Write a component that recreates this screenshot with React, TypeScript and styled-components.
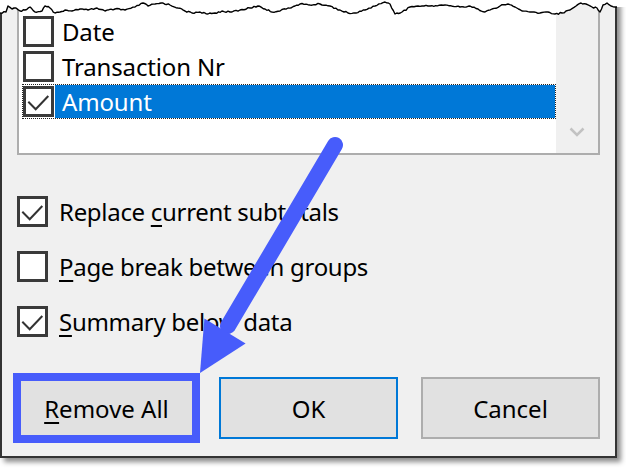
import React from "react";
import styled, { createGlobalStyle } from "styled-components";

const Global = createGlobalStyle`
  html, body { margin: 0; padding: 0; background: #ffffff; }
  body {
    width: 626px;
    height: 470px;
    overflow: hidden;
    font-family: "Noto Sans", "Segoe UI", "Liberation Sans", sans-serif;
  }
`;

const ACCENT = "#475cfb";

const Stage = styled.div`
  position: relative;
  width: 626px;
  height: 470px;
  background: #ffffff;
  overflow: hidden;
`;

const Dialog = styled.div`
  width: 617px;
  height: 458px;
  box-sizing: border-box;
  background: #f0f0f0;
  border: 2px solid #333333;
  border-top: none;
  box-shadow: 4px 4px 5px rgba(0, 0, 0, 0.45);
  padding: 0 15px 17px;
  display: flex;
  flex-direction: column;
`;

const ListBox = styled.div`
  height: 155px;
  box-sizing: border-box;
  border: 2px solid #adadad;
  background: #ffffff;
  display: flex;
`;

const List = styled.div`
  flex: 1;
  padding: 12px 0 0 3px;
  display: flex;
  flex-direction: column;
`;

const ScrollBar = styled.div`
  width: 42px;
  background: #f0f0f0;
  display: flex;
  flex-direction: column;
  justify-content: flex-end;
`;

const ScrollButton = styled.div`
  height: 42px;
  display: flex;
  align-items: center;
  justify-content: center;
`;

const Item = styled.div<{ $focused?: boolean }>`
  height: 35px;
  box-sizing: border-box;
  border: 1px dotted ${(p) => (p.$focused ? "#222" : "transparent")};
  display: flex;
  align-items: center;
`;

const ItemLabel = styled.div<{ $selected?: boolean }>`
  flex: 1;
  height: 100%;
  display: flex;
  align-items: center;
  padding-left: 7px;
  margin-left: 1px;
  font-size: 24px;
  letter-spacing: -0.15px;
  color: ${(p) => (p.$selected ? "#ffffff" : "#000000")};
  background: ${(p) => (p.$selected ? "#0078d7" : "transparent")};
`;

const Box = styled.div`
  width: 31px;
  height: 31px;
  flex: none;
  box-sizing: border-box;
  border: 3px solid #3a3a3a;
  background: #ffffff;
  display: flex;
`;

const Options = styled.div`
  margin-top: 29px;
  display: flex;
  flex-direction: column;
`;

const OptionRow = styled.label`
  height: 55px;
  display: flex;
  align-items: center;
  gap: 11px;
  font-size: 24px;
  letter-spacing: -0.3px;
  color: #000000;
`;

const Key = styled.span`
  text-decoration: underline;
  text-decoration-thickness: 2px;
  text-underline-offset: 4px;
`;

const Buttons = styled.div`
  margin-top: 28px;
  display: grid;
  grid-template-columns: repeat(3, 1fr);
  gap: 23px;
`;

const Button = styled.button<{ $default?: boolean }>`
  height: 62px;
  box-sizing: border-box;
  background: #e1e1e1;
  border: 2px solid ${(p) => (p.$default ? "#0078d7" : "#adadad")};
  font-family: inherit;
  font-size: 24px;
  color: #000000;
  padding: 0;
`;

const Highlight = styled.div`
  position: absolute;
  left: 13px;
  top: 373px;
  width: 187px;
  height: 70px;
  box-sizing: border-box;
  border: 8px solid ${ACCENT};
  pointer-events: none;
`;

const Overlay = styled.svg`
  position: absolute;
  left: 0;
  top: 0;
  pointer-events: none;
`;

const Check = () => (
  <svg width="25" height="25" viewBox="0 0 25 25">
    <polyline
      points="2.3,12.7 9.7,20.3 22.3,7"
      fill="none"
      stroke="#333"
      strokeWidth="2"
    />
  </svg>
);

const CheckBox = ({ checked }: { checked?: boolean }) => (
  <Box>{checked ? <Check /> : null}</Box>
);

const keyPts: [number, number][] = [
  [0, 13], [6, 12], [8, 6], [12, 9], [16, 8], [20, 11], [25, 10], [30, 7], [35, 12],
  [42, 11], [45, 6], [50, 8], [55, 13], [60, 12], [65, 10], [72, 11], [80, 9], [88, 10],
  [97, 8], [105, 11], [115, 9], [125, 10], [135, 7], [143, 3], [148, 6], [155, 4],
  [163, 3], [170, 5], [178, 8], [185, 11], [192, 13], [200, 12], [208, 14], [215, 13],
  [222, 11], [230, 12], [240, 10], [250, 8], [258, 6], [265, 9], [272, 12], [280, 11],
  [288, 8], [295, 6], [300, 4], [310, 5], [320, 4], [330, 6], [340, 10], [348, 13],
  [356, 13], [365, 10], [375, 6], [385, 2], [390, 4], [395, 14], [402, 12], [410, 7],
  [418, 6], [430, 6], [445, 5], [460, 7], [470, 6], [478, 9], [485, 12], [492, 9],
  [500, 6], [508, 4], [515, 7], [522, 11], [530, 12], [540, 13], [548, 12], [555, 14],
  [562, 13], [570, 10], [576, 6], [581, 3], [586, 4], [592, 7], [597, 8], [600, 12],
  [603, 5], [607, 3], [611, 6], [617, 7],
];

function tearPoints(): string {
  const out: string[] = [];
  let k = 0;
  for (let i = 0; i < keyPts.length - 1; i++) {
    const [x0, y0] = keyPts[i];
    const [x1, y1] = keyPts[i + 1];
    const steps = Math.max(1, Math.round((x1 - x0) / 2));
    for (let s = 0; s < steps; s++) {
      const t = s / steps;
      const x = x0 + (x1 - x0) * t;
      const h = Math.sin(k * 12.9898) * 43758.5453;
      const n = (h - Math.floor(h) - 0.5) * 1.6;
      const y = y0 + (y1 - y0) * t + (s === 0 ? 0 : n);
      out.push(`${x.toFixed(1)},${y.toFixed(1)}`);
      k++;
    }
  }
  const last = keyPts[keyPts.length - 1];
  out.push(`${last[0]},${last[1]}`);
  return out.join(" ");
}

const TornEdge = () => {
  const pts = tearPoints();
  return (
    <Overlay width="626" height="24" viewBox="0 0 626 24">
      <polygon points={`0,0 0,13 ${pts} 626,7 626,0`} fill="#ffffff" />
      <polyline points={pts} fill="none" stroke="#000" strokeWidth="1.4" strokeLinejoin="round" />
    </Overlay>
  );
};

const Arrow = () => (
  <Overlay width="626" height="470" viewBox="0 0 626 470">
    <line x1="335" y1="145" x2="228" y2="326" stroke={ACCENT} strokeWidth="16" strokeLinecap="round" />
    <polygon points="200,373 204.4,318.6 245.6,343.4" fill={ACCENT} />
  </Overlay>
);

export default function App() {
  return (
    <Stage>
      <Global />
      <Dialog>
        <ListBox>
          <List>
            <Item>
              <CheckBox />
              <ItemLabel>Date</ItemLabel>
            </Item>
            <Item>
              <CheckBox />
              <ItemLabel>Transaction Nr</ItemLabel>
            </Item>
            <Item $focused>
              <CheckBox checked />
              <ItemLabel $selected>Amount</ItemLabel>
            </Item>
          </List>
          <ScrollBar>
            <ScrollButton>
              <svg width="16" height="10" viewBox="0 0 16 10">
                <polyline points="1.5,1.5 8,8 14.5,1.5" fill="none" stroke="#c2c2c2" strokeWidth="2.5" />
              </svg>
            </ScrollButton>
          </ScrollBar>
        </ListBox>
        <Options>
          <OptionRow>
            <CheckBox checked />
            <span>
              Replace <Key>c</Key>urrent subtotals
            </span>
          </OptionRow>
          <OptionRow>
            <CheckBox />
            <span>
              <Key>P</Key>age break between groups
            </span>
          </OptionRow>
          <OptionRow>
            <CheckBox checked />
            <span>
              <Key>S</Key>ummary below data
            </span>
          </OptionRow>
        </Options>
        <Buttons>
          <Button>
            <Key>R</Key>emove All
          </Button>
          <Button $default>OK</Button>
          <Button>Cancel</Button>
        </Buttons>
      </Dialog>
      <TornEdge />
      <Highlight />
      <Arrow />
    </Stage>
  );
}
